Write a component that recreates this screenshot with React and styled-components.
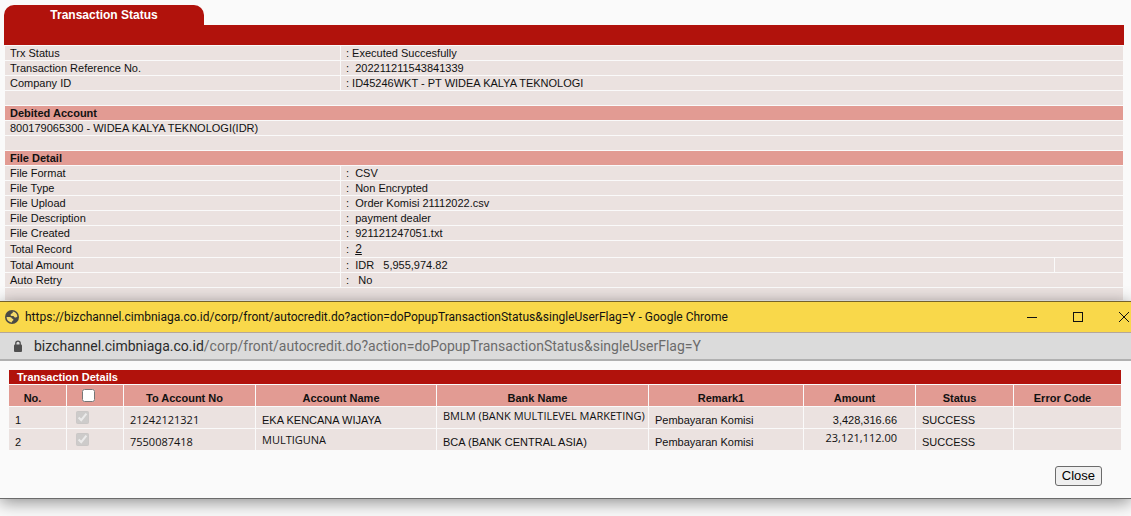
import styled, { createGlobalStyle } from "styled-components"

const GlobalStyle=createGlobalStyle`
  body{
    margin: 0;
    background-color: #fafafa;
    color: #111;
    font-family: "Liberation Sans", Arial, sans-serif;
    font-size: 11px;
  }
`
const Container=styled.div`
  min-height: 100vh;
  padding-top: 5px;
  box-sizing: border-box;
  overflow: hidden;
`
const Status=styled.main`
  padding: 0px 7px 0px 4px;
`
const Tab=styled.h1`
  width: 200px;
  height: 20px;
  margin: 0;
  border-radius: 10px 10px 0 0;
  background-color: #b1120c;
  color: white;
  font-size: 12px;
  line-height: 20px;
  text-align: center;
`
const TabBar=styled.div`
  height: 20px;
  background-color: #b1120c;
`
const StatusTable=styled.table`
  width: 100%;
  table-layout: fixed;
  border-spacing: 1px;
`
const Col=styled.col`
  width: ${props => props.$width ? props.$width + "px" : "auto"};
`
const StatusCell=styled.td`
  height: ${props => props.$height || 14}px;
  padding: 0px 5px;
  background-color: #ebe2e0;
  line-height: 14px;
  white-space: pre;
`
const SectionTitle=styled.th`
  height: 14px;
  padding: 0px 5px;
  background-color: #e29b93;
  line-height: 14px;
  text-align: left;
`
const RecordLink=styled.a`
  color: inherit;
  font-size: 12px;
`
const Popup=styled.section`
  position: relative;
  border-top: 1px solid #75622a;
  border-bottom: 1px solid #6b6b6b;
  background-color: #fafafa;
  box-shadow: 0 3px 16px rgba(0,0,0,0.45);
`
const TitleBar=styled.header`
  display: flex;
  align-items: center;
  height: 30px;
  padding-left: 5px;
  background-color: #f9d84a;
  border-bottom: 1px solid #b5a79a;
  overflow: hidden;
`
const WindowTitle=styled.h2`
  flex: 1;
  margin: 0px 0px 0px 6px;
  font-family: Roboto, sans-serif;
  font-size: 12px;
  font-weight: 400;
  white-space: nowrap;
`
const WindowButton=styled.button`
  display: flex;
  justify-content: center;
  flex: none;
  width: 46px;
  padding: 0;
  border: none;
  background: none;
`
const WindowButtons=styled.div`
  display: flex;
  margin-right: -16px;
`
const AddressBar=styled.div`
  display: flex;
  align-items: center;
  height: 26px;
  padding-left: 13px;
  background-color: #dbdbdb;
  border-bottom: 2px solid #b0b0b0;
`
const Address=styled.span`
  margin-left: 11px;
  color: #6b6b6b;
  font-family: Roboto, sans-serif;
  font-size: 14px;
  white-space: nowrap;
`
const Domain=styled.span`
  color: #2b2b2b;
`
const PopupBody=styled.div`
  padding: 8px 9px 12px 8px;
`
const DetailTable=styled.table`
  width: 100%;
  table-layout: fixed;
  border-spacing: 1px;
`
const DetailTitle=styled.th`
  height: 14px;
  padding: 0px 8px;
  background-color: #b1120c;
  color: white;
  line-height: 14px;
  text-align: left;
`
const HeadCell=styled.th`
  height: 21px;
  padding: 0px 10px 0px 0px;
  box-sizing: border-box;
  background-color: #e29b93;
  line-height: 16px;
  vertical-align: bottom;
`
const DetailCell=styled.td`
  height: 21px;
  padding: 1px 6px 0px;
  box-sizing: border-box;
  background-color: #ebe2e0;
  line-height: 16px;
  text-align: ${props => props.$align || "left"};
  vertical-align: ${props => props.$valign || "bottom"};
  white-space: nowrap;
`
const AmountCell=styled(DetailCell)`
  padding-right: 18px;
`
const Humanist=styled.span`
  font-family: "Open Sans", sans-serif;
`
const Check=styled.input`
  display: block;
  width: 13px;
  height: 13px;
  margin: ${props => props.$head ? "0px 0px 4px 15px" : "0px 0px 4px 3px"};
`
const Footer=styled.footer`
  display: flex;
  justify-content: flex-end;
  padding: 15px 20px 0px 0px;
`
const CloseButton=styled.button`
  height: 20px;
  padding: 0px 6px;
  border: 1px solid #6b6b6b;
  border-radius: 3px;
  background-color: #efefef;
  color: black;
  font-family: inherit;
  font-size: 13px;
  line-height: 18px;
`

const GlobeIcon = () => (
  <svg width="14" height="14" viewBox="0 0 14 14" aria-hidden="true">
    <circle cx="7" cy="7" r="7" fill="#4b4a45"/>
    <path d="M7.6 1.6 C8.6 2.8 7 3.4 5.8 4.2 C5 5.2 6 6.2 8 6 C9.4 6.2 9 7.4 10 7.6 C11.2 7.6 12 6.8 12.4 6.4 C12.2 3.8 10.2 1.8 7.6 1.6Z" fill="#f3d96a"/>
    <path d="M1.6 7 H4.6 C6 7 6.8 7.8 7 8.8 C8.4 8.8 8.6 9.4 8.2 10.4 C7.4 10.8 7 11.4 6.8 12.4 C3.8 12.2 1.6 9.8 1.6 7Z" fill="#f3d96a"/>
  </svg>
)

const LockIcon = () => (
  <svg width="10" height="13" viewBox="0 0 10 13" aria-hidden="true">
    <path d="M2.8 6 V3.3 a2.2 2.2 0 0 1 4.4 0 V6" fill="none" stroke="#4f4f4f" strokeWidth="1.3"/>
    <rect x="1" y="4.6" width="8" height="7.4" rx="1" fill="#4f4f4f"/>
  </svg>
)

const summary = [
  ["Trx Status", ": Executed Succesfully"],
  ["Transaction Reference No.", ":  202211211543841339"],
  ["Company ID", ": ID45246WKT - PT WIDEA KALYA TEKNOLOGI"],
]

const fileDetail = [
  ["File Format", ":  CSV"],
  ["File Type", ":  Non Encrypted"],
  ["File Upload", ":  Order Komisi 21112022.csv"],
  ["File Description", ":  payment dealer"],
  ["File Created", ":  921121247051.txt"],
]

const StatusRow = ({ label, value }) => (
  <tr>
    <StatusCell>{label}</StatusCell>
    <StatusCell colSpan={2}>{value}</StatusCell>
  </tr>
)

const App = () => {
  return (
    <Container>
      <GlobalStyle/>
      <Status>
        <Tab>Transaction Status</Tab>
        <TabBar/>
        <StatusTable>
          <colgroup>
            <Col $width={335}/>
            <Col/>
            <Col $width={68}/>
          </colgroup>
          <tbody>
            {summary.map(([label, value]) => <StatusRow key={label} label={label} value={value}/>)}
            <tr><StatusCell colSpan={3}/></tr>
            <tr><SectionTitle colSpan={3}>Debited Account</SectionTitle></tr>
            <tr><StatusCell colSpan={3}>800179065300 - WIDEA KALYA TEKNOLOGI(IDR)</StatusCell></tr>
            <tr><StatusCell colSpan={3}/></tr>
            <tr><SectionTitle colSpan={3}>File Detail</SectionTitle></tr>
            {fileDetail.map(([label, value]) => <StatusRow key={label} label={label} value={value}/>)}
            <tr>
              <StatusCell $height={16}>Total Record</StatusCell>
              <StatusCell $height={16} colSpan={2}>{":  "}<RecordLink href="#">2</RecordLink></StatusCell>
            </tr>
            <tr>
              <StatusCell>Total Amount</StatusCell>
              <StatusCell>{":  IDR   5,955,974.82"}</StatusCell>
              <StatusCell/>
            </tr>
            <StatusRow label="Auto Retry" value=":   No"/>
            <tr><StatusCell colSpan={3} $height={12}/></tr>
          </tbody>
        </StatusTable>
      </Status>
      <Popup>
        <TitleBar>
          <GlobeIcon/>
          <WindowTitle>https://bizchannel.cimbniaga.co.id/corp/front/autocredit.do?action=doPopupTransactionStatus&singleUserFlag=Y - Google Chrome</WindowTitle>
          <WindowButtons>
            <WindowButton aria-label="Minimize">
              <svg width="10" height="10"><path d="M0 5.5H10" stroke="#111"/></svg>
            </WindowButton>
            <WindowButton aria-label="Maximize">
              <svg width="10" height="10"><rect x="0.5" y="0.5" width="9" height="9" fill="none" stroke="#111"/></svg>
            </WindowButton>
            <WindowButton aria-label="Close window">
              <svg width="10" height="10"><path d="M0 0L10 10M10 0L0 10" stroke="#111"/></svg>
            </WindowButton>
          </WindowButtons>
        </TitleBar>
        <AddressBar>
          <LockIcon/>
          <Address><Domain>bizchannel.cimbniaga.co.id</Domain>/corp/front/autocredit.do?action=doPopupTransactionStatus&singleUserFlag=Y</Address>
        </AddressBar>
        <PopupBody>
          <DetailTable>
            <colgroup>
              <Col $width={57}/>
              <Col $width={56}/>
              <Col $width={131}/>
              <Col $width={180}/>
              <Col $width={211}/>
              <Col $width={154}/>
              <Col $width={111}/>
              <Col $width={97}/>
              <Col $width={107}/>
            </colgroup>
            <thead>
              <tr><DetailTitle colSpan={9}>Transaction Details</DetailTitle></tr>
              <tr>
                <HeadCell>No.</HeadCell>
                <HeadCell><Check type="checkbox" $head aria-label="Select all"/></HeadCell>
                <HeadCell>To Account No</HeadCell>
                <HeadCell>Account Name</HeadCell>
                <HeadCell>Bank Name</HeadCell>
                <HeadCell>Remark1</HeadCell>
                <HeadCell>Amount</HeadCell>
                <HeadCell>Status</HeadCell>
                <HeadCell>Error Code</HeadCell>
              </tr>
            </thead>
            <tbody>
              <tr>
                <DetailCell>1</DetailCell>
                <DetailCell><Check type="checkbox" defaultChecked disabled aria-label="Select 1"/></DetailCell>
                <DetailCell><Humanist>21242121321</Humanist></DetailCell>
                <DetailCell>EKA KENCANA WIJAYA</DetailCell>
                <DetailCell $valign="top"><Humanist>BMLM (BANK MULTILEVEL MARKETING)</Humanist></DetailCell>
                <DetailCell>Pembayaran Komisi</DetailCell>
                <AmountCell $align="right">3,428,316.66</AmountCell>
                <DetailCell>SUCCESS</DetailCell>
                <DetailCell/>
              </tr>
              <tr>
                <DetailCell>2</DetailCell>
                <DetailCell><Check type="checkbox" defaultChecked disabled aria-label="Select 2"/></DetailCell>
                <DetailCell><Humanist>7550087418</Humanist></DetailCell>
                <DetailCell $valign="middle"><Humanist>MULTIGUNA</Humanist></DetailCell>
                <DetailCell>BCA (BANK CENTRAL ASIA)</DetailCell>
                <DetailCell>Pembayaran Komisi</DetailCell>
                <AmountCell $align="right" $valign="top"><Humanist>23,121,112.00</Humanist></AmountCell>
                <DetailCell>SUCCESS</DetailCell>
                <DetailCell/>
              </tr>
            </tbody>
          </DetailTable>
          <Footer>
            <CloseButton>Close</CloseButton>
          </Footer>
        </PopupBody>
      </Popup>
    </Container>
  )
}

export default App
